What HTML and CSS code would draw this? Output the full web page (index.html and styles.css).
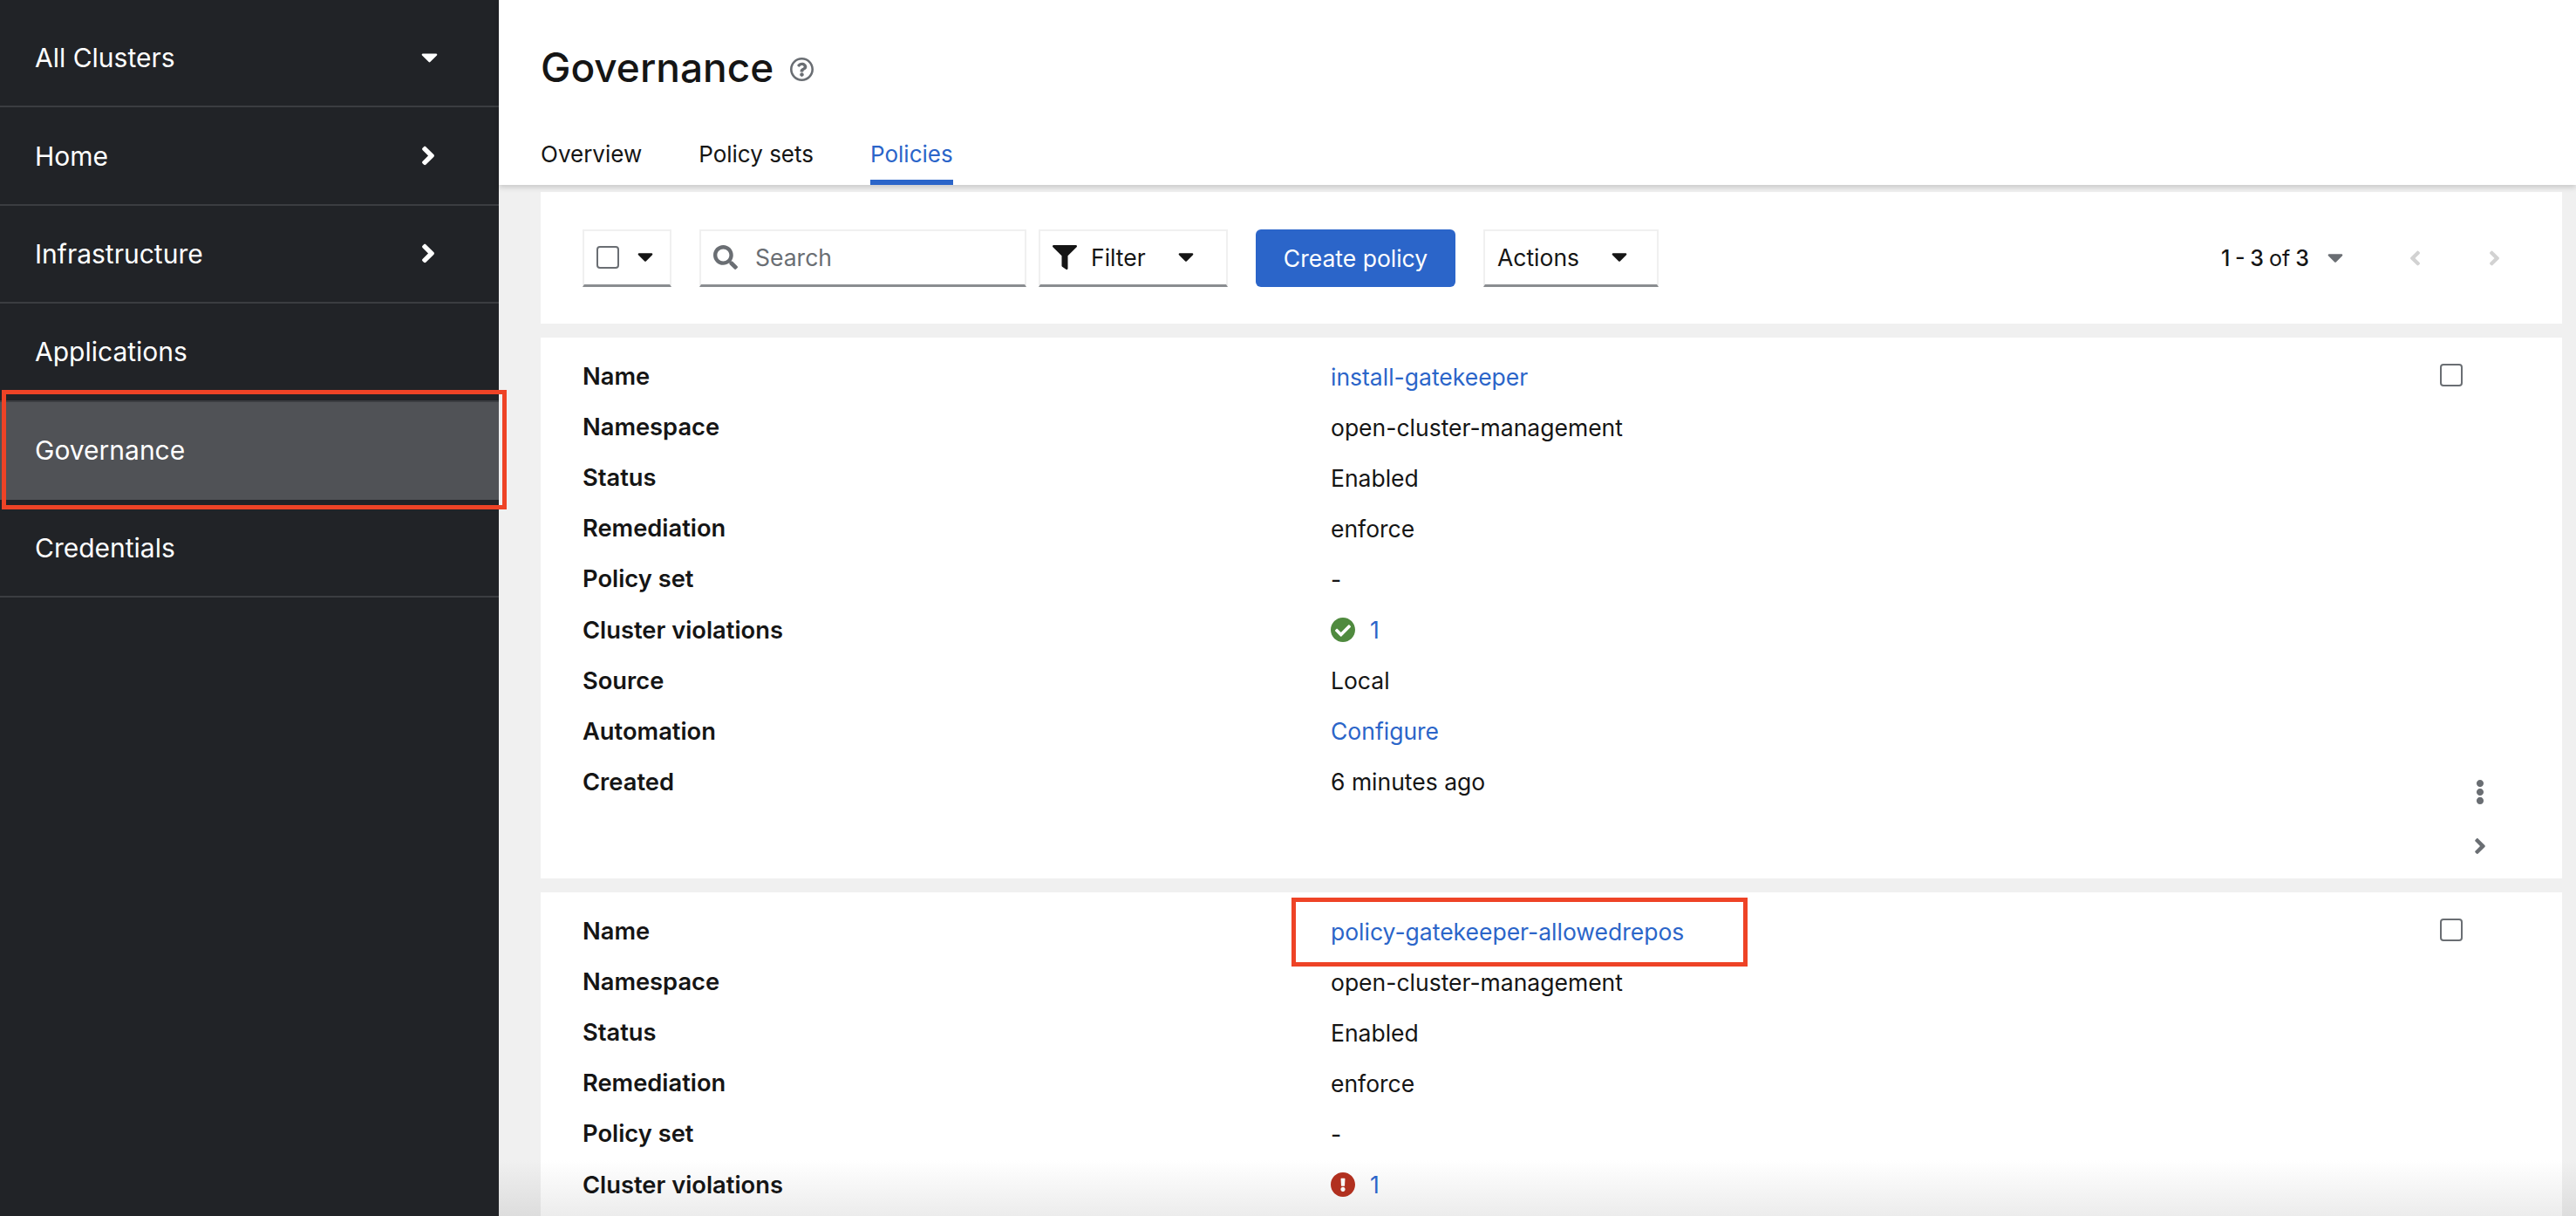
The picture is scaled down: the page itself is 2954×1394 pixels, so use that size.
FILE: index.html
```html
<!DOCTYPE html>
<html lang="en">
  <head>
    <meta charset="UTF-8" />
    <meta name="viewport" content="width=device-width,initial-scale=1" />
    <title>Governance</title>
    <link rel="stylesheet" href="styles.css">
  </head>
  <body>
    <svg class="sprite" xmlns="http://www.w3.org/2000/svg">
      <symbol id="i-caret" viewBox="0 192 320 170"><path d="M31.3 192h257.3c17.8 0 26.7 21.5 14.1 34.1L174.1 354.8c-7.8 7.8-20.5 7.8-28.3 0L17.2 226.1C4.6 213.5 13.5 192 31.3 192z"/></symbol>
      <symbol id="i-angle" viewBox="24 96 208 320"><path d="M224.3 273l-136 136c-9.4 9.4-24.6 9.4-33.9 0l-22.6-22.6c-9.4-9.4-9.4-24.6 0-33.9l96.4-96.4-96.4-96.4c-9.4-9.4-9.4-24.6 0-33.9L54.3 103c9.4-9.4 24.6-9.4 33.9 0l136 136c9.5 9.4 9.5 24.6.1 34z"/></symbol>
      <symbol id="i-search" viewBox="0 0 512 512"><path d="M505 442.7L405.3 343c-4.5-4.5-10.6-7-17-7H372c27.6-35.3 44-79.7 44-128C416 93.1 322.9 0 208 0S0 93.1 0 208s93.1 208 208 208c48.3 0 92.7-16.4 128-44v16.3c0 6.4 2.5 12.5 7 17l99.7 99.7c9.4 9.4 24.6 9.4 33.9 0l28.3-28.3c9.4-9.4 9.4-24.6.1-34zM208 336c-70.7 0-128-57.2-128-128 0-70.7 57.2-128 128-128 70.7 0 128 57.2 128 128 0 70.7-57.2 128-128 128z"/></symbol>
      <symbol id="i-filter" viewBox="0 0 512 512"><path d="M487.976 0H24.028C2.71 0-8.047 25.866 7.058 40.971L192 225.941V432c0 7.831 3.821 15.17 10.237 19.662l80 55.98C298.02 518.69 320 507.493 320 487.98V225.941l184.947-184.97C520.021 25.896 509.338 0 487.976 0z"/></symbol>
      <symbol id="i-check" viewBox="8 8 496 496"><path d="M504 256c0 136.967-111.033 248-248 248S8 392.967 8 256 119.033 8 256 8s248 111.033 248 248zM227.314 387.314l184-184c6.248-6.248 6.248-16.379 0-22.627l-22.627-22.627c-6.248-6.249-16.379-6.249-22.628 0L216 308.118l-70.059-70.059c-6.248-6.248-16.379-6.248-22.628 0l-22.627 22.627c-6.248 6.248-6.248 16.379 0 22.627l104 104c6.249 6.249 16.379 6.249 22.628.001z"/></symbol>
      <symbol id="i-alert" viewBox="8 8 496 496"><path d="M504 256c0 136.997-111.043 248-248 248S8 392.997 8 256C8 119.083 119.043 8 256 8s248 111.083 248 248zm-248 50c-25.405 0-46 20.595-46 46s20.595 46 46 46 46-20.595 46-46-20.595-46-46-46zm-43.673-165.346l7.418 136c.347 6.364 5.609 11.346 11.982 11.346h48.546c6.373 0 11.635-4.982 11.982-11.346l7.418-136c.375-6.874-5.098-12.654-11.982-12.654h-63.383c-6.884 0-12.356 5.78-11.981 12.654z"/></symbol>
      <symbol id="i-kebab" viewBox="24 8 144 496"><path d="M96 184c39.8 0 72 32.2 72 72s-32.2 72-72 72-72-32.2-72-72 32.2-72 72-72zM24 80c0 39.8 32.2 72 72 72s72-32.2 72-72S135.8 8 96 8 24 40.2 24 80zm0 352c0 39.8 32.2 72 72 72s72-32.2 72-72-32.2-72-72-72-72 32.2-72 72z"/></symbol>
      <symbol id="i-help" viewBox="8 8 496 496"><path d="M256 8C119.043 8 8 119.083 8 256c0 136.997 111.043 248 248 248s248-111.003 248-248C504 119.083 392.957 8 256 8zm0 448c-110.532 0-200-89.431-200-200 0-110.495 89.472-200 200-200 110.491 0 200 89.471 200 200 0 110.53-89.431 200-200 200zm107.244-255.2c0 67.052-72.421 68.084-72.421 92.863V300c0 6.627-5.373 12-12 12h-45.647c-6.627 0-12-5.373-12-12v-8.659c0-35.745 27.1-50.034 47.579-61.516 17.561-9.845 28.324-16.541 28.324-29.579 0-17.246-21.999-28.693-39.784-28.693-23.189 0-33.894 10.977-48.942 29.969-4.057 5.12-11.46 6.071-16.666 2.124l-27.824-21.098c-5.107-3.872-6.251-11.066-2.644-16.363C184.846 131.491 214.94 112 261.794 112c49.071 0 101.45 38.304 101.45 88.8zM298 368c0 23.159-18.841 42-42 42s-42-18.841-42-42 18.841-42 42-42 42 18.841 42 42z"/></symbol>
    </svg>

    <aside class="sidebar">
      <nav class="nav">
        <a class="nav-item" href="#">All Clusters <svg class="nav-caret"><use href="#i-caret"/></svg></a>
        <a class="nav-item" href="#">Home <svg class="nav-angle"><use href="#i-angle"/></svg></a>
        <a class="nav-item" href="#">Infrastructure <svg class="nav-angle"><use href="#i-angle"/></svg></a>
        <a class="nav-item" href="#">Applications</a>
        <a class="nav-item active" href="#">Governance</a>
        <a class="nav-item" href="#">Credentials</a>
      </nav>
    </aside>

    <main class="main">
      <header class="page-header">
        <h1>Governance <svg class="help"><use href="#i-help"/></svg></h1>
        <div class="tabs">
          <a class="tab" href="#">Overview</a>
          <a class="tab" href="#">Policy sets</a>
          <a class="tab current" href="#">Policies</a>
        </div>
      </header>

      <section class="content">
        <div class="toolbar">
          <div class="control select-all">
            <span class="checkbox"></span>
            <svg class="caret"><use href="#i-caret"/></svg>
          </div>
          <div class="control search">
            <svg class="search-icon"><use href="#i-search"/></svg>
            <span class="placeholder">Search</span>
          </div>
          <div class="control filter">
            <svg class="filter-icon"><use href="#i-filter"/></svg>
            <span>Filter</span>
            <svg class="caret"><use href="#i-caret"/></svg>
          </div>
          <button class="primary">Create policy</button>
          <div class="control actions">
            <span>Actions</span>
            <svg class="caret"><use href="#i-caret"/></svg>
          </div>
          <div class="pagination">
            <span class="page-range"><b>1 - 3</b> of <b>3</b></span>
            <svg class="caret muted"><use href="#i-caret"/></svg>
            <svg class="page-prev"><use href="#i-angle"/></svg>
            <svg class="page-next"><use href="#i-angle"/></svg>
          </div>
        </div>

        <article class="card">
          <dl class="fields">
            <dt>Name</dt><dd><a href="#">install-gatekeeper</a></dd>
            <dt>Namespace</dt><dd>open-cluster-management</dd>
            <dt>Status</dt><dd>Enabled</dd>
            <dt>Remediation</dt><dd>enforce</dd>
            <dt>Policy set</dt><dd>-</dd>
            <dt>Cluster violations</dt><dd><svg class="status ok"><use href="#i-check"/></svg><a href="#">1</a></dd>
            <dt>Source</dt><dd>Local</dd>
            <dt>Automation</dt><dd><a href="#">Configure</a></dd>
            <dt>Created</dt><dd>6 minutes ago</dd>
          </dl>
          <div class="card-side">
            <span class="checkbox"></span>
            <svg class="kebab"><use href="#i-kebab"/></svg>
            <svg class="expand"><use href="#i-angle"/></svg>
          </div>
        </article>

        <article class="card last">
          <dl class="fields">
            <dt>Name</dt><dd><a href="#">policy-gatekeeper-allowedrepos</a></dd>
            <dt>Namespace</dt><dd>open-cluster-management</dd>
            <dt>Status</dt><dd>Enabled</dd>
            <dt>Remediation</dt><dd>enforce</dd>
            <dt>Policy set</dt><dd>-</dd>
            <dt>Cluster violations</dt><dd><svg class="status bad"><use href="#i-alert"/></svg><a href="#">1</a></dd>
          </dl>
          <div class="card-side">
            <span class="checkbox"></span>
          </div>
        </article>
      </section>
    </main>

    <!-- red callouts sit over the page -->
    <div class="callout callout-nav"></div>
    <div class="callout callout-link"></div>
  </body>
</html>
```

FILE: styles.css
```css
html,
body {
  height: 100%;
}

body {
  margin: 0;
  display: flex;
  position: relative;
  overflow: hidden;
  font-family: Inter, "Open Sans", sans-serif;
  font-size: 26.5px;
  color: #151515;
  background-color: #f0f0f0;
}

a {
  color: #2b65c9;
  text-decoration: none;
}

.sprite {
  display: none;
}

svg {
  fill: currentColor;
  flex: none;
}

.sidebar {
  width: 572px;
  flex: none;
  background-color: #212327;
}

.nav {
  padding-top: 11px;
}

.nav-item {
  height: 110.4px;
  padding: 0 70px 0 40px;
  display: flex;
  align-items: center;
  justify-content: space-between;
  font-size: 30px;
  color: #ffffff;
  border-bottom: 2px solid #3b3d41;
}

.nav-item.active {
  background-color: #505256;
  border-bottom-color: #505256;
}

.nav-caret {
  width: 19px;
  height: 11px;
}

.nav-angle {
  width: 14px;
  height: 23px;
  margin-right: 4px;
}

.main {
  flex: 1;
  min-width: 0;
  height: 100%;
  display: flex;
  flex-direction: column;
}

.page-header {
  padding: 48px 48px 0;
  background-color: #ffffff;
  box-shadow: 0 3px 6px rgba(0, 0, 0, 0.16);
  position: relative;
}

h1 {
  margin: 0;
  display: flex;
  align-items: center;
  gap: 19px;
  font-size: 46px;
  line-height: 58px;
  font-weight: 500;
}

.help {
  width: 27px;
  height: 27px;
  margin-top: 4px;
  color: #6a6e73;
}

.tabs {
  margin-top: 34px;
  display: flex;
  gap: 65px;
  font-size: 26px;
}

.tab {
  height: 72px;
  display: flex;
  align-items: center;
  color: #151515;
  box-sizing: border-box;
}

.tab.current {
  color: #2b65c9;
  border-bottom: 6px solid #2b65c9;
  padding-top: 6px;
}

.content {
  flex: 1;
  min-height: 0;
  padding: 8px 16px 0 48px;
  display: flex;
  flex-direction: column;
  gap: 16px;
  background: linear-gradient(to top, #dddddd, #f0f0f0 64px);
}

.toolbar {
  height: 151px;
  box-sizing: border-box;
  padding: 0 72px 0 48px;
  display: flex;
  align-items: center;
  background-color: #ffffff;
}

.control {
  height: 66px;
  box-sizing: border-box;
  display: flex;
  align-items: center;
  border: 2px solid #f0f0f0;
  border-bottom: 3px solid #8a8d90;
}

.checkbox {
  width: 26px;
  height: 26px;
  box-sizing: border-box;
  display: block;
  border: 2px solid #6a6e73;
  border-radius: 4px;
  background-color: #ffffff;
}

.caret {
  width: 18px;
  height: 10px;
}

.caret.muted {
  color: #6a6e73;
}

.select-all {
  width: 102px;
  padding-left: 14px;
  gap: 21px;
  margin-right: 32px;
}

.search {
  width: 375px;
  padding-left: 14px;
  gap: 20px;
  margin-right: 14px;
}

.search-icon {
  width: 28px;
  height: 28px;
  color: #6a6e73;
}

.placeholder {
  color: #6a6e73;
}

.filter {
  width: 217px;
  padding-left: 14px;
  margin-right: 32px;
}

.filter-icon {
  width: 28px;
  height: 28px;
  margin-right: 16px;
}

.filter .caret {
  margin-left: 37px;
}

.primary {
  width: 229px;
  height: 66px;
  margin-right: 32px;
  padding: 0;
  font: inherit;
  color: #ffffff;
  background-color: #2b65c9;
  border: none;
  border-radius: 6px;
}

.actions {
  width: 201px;
  padding-left: 14px;
}

.actions .caret {
  margin-left: 37px;
}

.pagination {
  margin-left: auto;
  display: flex;
  align-items: center;
}

.page-range {
  font-size: 25px;
  white-space: nowrap;
  word-spacing: -1px;
}

.page-range b {
  font-weight: 500;
}

.pagination .caret {
  margin-left: 21px;
}

.page-prev,
.page-next {
  width: 11px;
  height: 18px;
  color: #d2d2d2;
}

.page-prev {
  margin-left: 77px;
  transform: scaleX(-1);
}

.page-next {
  margin-left: 80px;
}

.card {
  height: 620px;
  flex: none;
  display: flex;
  background-color: #ffffff;
}

.card.last {
  height: auto;
  flex: 1;
  min-height: 0;
  background: linear-gradient(to top, #ececec, #ffffff 64px);
}

.fields {
  flex: 1;
  margin: 0;
  padding: 15.5px 0 0 48px;
  display: grid;
  grid-template-columns: 858px 1fr;
  grid-auto-rows: 58.1px;
  align-content: start;
  align-items: center;
}

dt {
  font-size: 27.3px;
  font-weight: 600;
}

dd {
  margin: 0;
  display: flex;
  align-items: center;
}

.status {
  width: 28px;
  height: 28px;
  margin-right: 17px;
}

.status.ok {
  color: #4f8a3e;
}

.status.bad {
  color: #b1301f;
}

.card-side {
  width: 140px;
  flex: none;
  box-sizing: border-box;
  padding: 30px 0 28px;
  display: flex;
  flex-direction: column;
}

.kebab {
  width: 10px;
  height: 28px;
  margin: auto 0 39px 41px;
  color: #6a6e73;
}

.expand {
  width: 12px;
  height: 18px;
  margin-left: 40px;
  color: #6a6e73;
}

.callout {
  position: absolute;
  box-sizing: border-box;
  border: 5px solid #ee4326;
  pointer-events: none;
}

.callout-nav {
  left: 2px;
  top: 447px;
  width: 579px;
  height: 137px;
}

.callout-link {
  left: 1481px;
  top: 1029px;
  width: 523px;
  height: 79px;
}
```
